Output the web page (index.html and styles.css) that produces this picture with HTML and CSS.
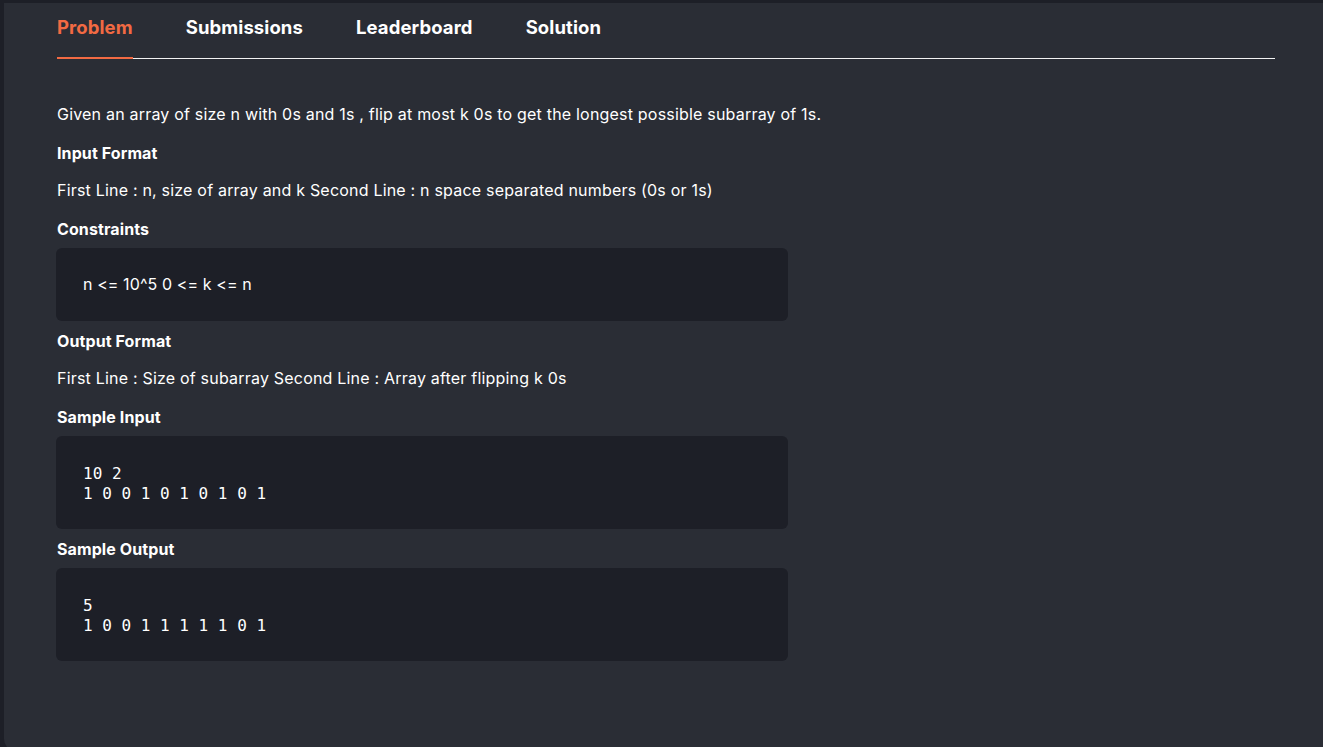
FILE: index.html
```html
<!DOCTYPE html>
<html lang="en">
<head>
<meta charset="utf-8">
<title>Problem</title>
<link rel="stylesheet" href="styles.css">
</head>
<body>
<div class="panel">
  <nav class="tabs">
    <a class="tab active">Problem</a>
    <a class="tab">Submissions</a>
    <a class="tab">Leaderboard</a>
    <a class="tab">Solution</a>
  </nav>
  <div class="content">
    <p class="text">Given an array of size n with 0s and 1s , flip at most k 0s to get the longest possible subarray of 1s.</p>
    <h3 class="heading">Input Format</h3>
    <p class="text">First Line : n, size of array and k Second Line : n space separated numbers (0s or 1s)</p>
    <h3 class="heading tight">Constraints</h3>
    <div class="block prose">n &lt;= 10^5 0 &lt;= k &lt;= n</div>
    <h3 class="heading">Output Format</h3>
    <p class="text">First Line : Size of subarray Second Line : Array after flipping k 0s</p>
    <h3 class="heading tight">Sample Input</h3>
    <pre class="block code">10 2
1 0 0 1 0 1 0 1 0 1</pre>
    <h3 class="heading tight">Sample Output</h3>
    <pre class="block code">5
1 0 0 1 1 1 1 1 0 1</pre>
  </div>
</div>
</body>
</html>
```

FILE: styles.css
```css
html, body {
  margin: 0;
  padding: 0;
  overflow: hidden;
  height: 100%;
}

body {
  background: #1d1f27;
  font-family: "Inter", "Lato", sans-serif;
  color: #ffffff;
}

.panel {
  margin: 3px 0 0 4px;
  width: 1323px;
  height: 748px;
  box-sizing: border-box;
  background: #2a2d35;
  border-radius: 0 0 12px 12px;
  padding: 0 52px 0 53px;
}

.tabs {
  display: flex;
  gap: 53px;
  width: 1218px;
  border-bottom: 1px solid #f2f2f2;
  padding-top: 12px;
}

.tab {
  font-size: 18.5px;
  font-weight: 700;
  line-height: 24px;
  padding-bottom: 19px;
  color: #ffffff;
  letter-spacing: 0.1px;
  cursor: pointer;
}

.tab.active {
  color: #f26a43;
  border-bottom: 2px solid #f26a43;
  padding-bottom: 17px;
  margin-bottom: -1px;
}

.content {
  width: 1218px;
  padding-top: 43px;
}

.text {
  margin: 0 0 15px;
  font-size: 16px;
  line-height: 24px;
  letter-spacing: 0.2px;
}

.heading {
  margin: 0 0 13px;
  font-size: 16px;
  font-weight: 700;
  line-height: 24px;
  letter-spacing: 0.1px;
}

.heading.tight {
  margin-bottom: 7px;
}

.block {
  width: 732px;
  box-sizing: border-box;
  margin: 0 0 8px -1px;
  background: #1d1f27;
  border-radius: 6px;
  padding: 26px 26px 26px 27px;
  color: #ffffff;
}

.prose {
  font-size: 16px;
  line-height: 21px;
  letter-spacing: 0.1px;
}

.code {
  font-family: "DejaVu Sans Mono", monospace;
  font-size: 16px;
  line-height: 20px;
  padding-top: 28px;
  padding-bottom: 25px;
  white-space: pre;
}
```
